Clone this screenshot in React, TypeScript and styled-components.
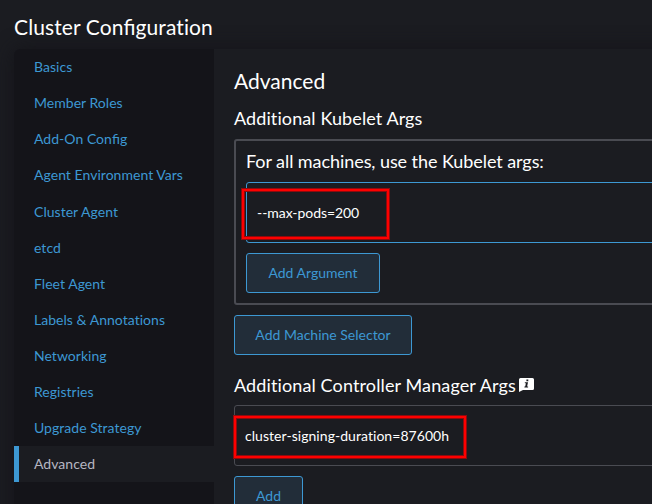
import React from "react";
import styled, { createGlobalStyle } from "styled-components";

const GlobalStyle = createGlobalStyle`
  * { box-sizing: border-box; }
  html, body { margin: 0; height: 504px; overflow: hidden; background: #1b1c21; }
  body {
    font: 14px/16.1px Lato, sans-serif;
    font-variant-ligatures: none;
    color: #fff;
  }
`;

const Page = styled.main`
  width: 652px;
  height: 504px;
  padding: 13px 0 0 14px;
  overflow: hidden;
`;

const Title = styled.h2`
  margin: 0 0 9.15px;
  font-size: 21px;
  line-height: 27px;
  font-weight: 400;
  letter-spacing: 0.1px;
`;

const Ligature = styled.span`
  font-variant-ligatures: common-ligatures;
  letter-spacing: 0;
`;

const Shell = styled.div`
  display: flex;
  width: 900px;
  height: 600px;
  border-radius: 6px;
  box-shadow: 0 0 20px #141419;
  background: #1b1c21;
`;

const Nav = styled.nav`
  width: 200px;
  flex: none;
  background: #141419;
  border-radius: 6px 0 0 6px;
`;

const NavItem = styled.a<{ $active?: boolean }>`
  display: block;
  padding: 10px 15px;
  border-left: 5px solid ${(p) => (p.$active ? "#3d98d3" : "transparent")};
  background: ${(p) => (p.$active ? "#1b1c21" : "transparent")};
  color: ${(p) => (p.$active ? "#b6b6c2" : "#3d98d3")};
  letter-spacing: 0.03px;
`;

const Content = styled.section`
  flex: 1;
  padding: 18.85px 20px 20px;
`;

const Heading = styled.h2`
  margin: 0 0 15px;
  font-size: 21px;
  line-height: 25px;
  font-weight: 400;
`;

const SubHeading = styled.h3<{ $gap?: number; $tracking?: number }>`
  display: flex;
  align-items: center;
  margin: 0 0 ${(p) => p.$gap ?? 10}px;
  font-size: 18px;
  line-height: 21px;
  font-weight: 400;
  letter-spacing: ${(p) => p.$tracking ?? 0.1}px;
`;

const Group = styled.div`
  height: 166px;
  margin-bottom: 10px;
  padding: 10px;
  border: 2px solid #4a4b52;
  border-radius: 3px;
`;

const ArgField = styled.div<{ $focused?: boolean; $tracking: number }>`
  position: relative;
  display: flex;
  align-items: center;
  height: 61px;
  padding: 2px 10px 0;
  margin-bottom: 10px;
  border: 1px solid ${(p) => (p.$focused ? "#3d98d3" : "#4a4b52")};
  border-radius: 3px;
  letter-spacing: ${(p) => p.$tracking}px;
`;

const Mark = styled.span<{ $x: number; $y: number; $w: number; $h: number }>`
  position: absolute;
  left: ${(p) => p.$x}px;
  top: ${(p) => p.$y}px;
  width: ${(p) => p.$w}px;
  height: ${(p) => p.$h}px;
  border: 1px solid #8c0b0e;
  box-shadow: inset 0 0 0 2px #fe0000, inset 0 0 0 3px #8c0b0e;
`;

const Button = styled.button<{ $w: number; $gap?: number }>`
  display: block;
  width: ${(p) => p.$w}px;
  height: 40px;
  margin: 0 0 ${(p) => p.$gap ?? 0}px;
  padding: 0;
  border: 1px solid #3d98d3;
  border-radius: 3px;
  background: #222d39;
  color: #3d98d3;
  font: inherit;
  font-variant-ligatures: none;
`;

const InfoIcon = styled.svg`
  width: 15px;
  height: 14px;
  margin-left: 3px;
  margin-top: -1px;
`;

const tabs = [
  "Basics", "Member Roles", "Add-On Config", "Agent Environment Vars",
  "Cluster Agent", "etcd", "Fleet Agent", "Labels & Annotations",
  "Networking", "Registries", "Upgrade Strategy", "Advanced",
];

/* Joins "fi" while leaving every other letter pair unligated. */
function Label({ text }: { text: string }) {
  const at = text.indexOf("fi");
  if (at < 0) return <>{text}</>;
  return (
    <>
      {text.slice(0, at)}
      <Ligature>fi</Ligature>
      {text.slice(at + 2)}
    </>
  );
}

export default function App() {
  return (
    <Page>
      <GlobalStyle />
      <Title><Label text="Cluster Configuration" /></Title>
      <Shell>
        <Nav>
          {tabs.map((tab) => (
            <NavItem key={tab} $active={tab === "Advanced"}><Label text={tab} /></NavItem>
          ))}
        </Nav>
        <Content>
          <Heading>Advanced</Heading>
          <SubHeading>Additional Kubelet Args</SubHeading>
          <Group>
            <SubHeading $tracking={-0.07}>For all machines, use the Kubelet args:</SubHeading>
            <ArgField $focused $tracking={-0.06}>
              --max-pods=200
              <Mark $x={-6} $y={5} $w={149} $h={52} />
            </ArgField>
            <Button $w={134}>Add Argument</Button>
          </Group>
          <Button $w={178} $gap={20}>Add Machine Selector</Button>
          <SubHeading $gap={9} $tracking={0.12}>
            Additional Controller Manager Args
            <InfoIcon viewBox="0 0 15 14">
              <path d="M1.5 0h12Q15 0 15 1.5v9q0 1.5-1.5 1.5H4L0 14V1.5Q0 0 1.5 0z" fill="#fff" />
              <path d="M7.4 1.6h1.9v1.7H7.4zM5.8 4.3h3.2L8.1 8.6h1v1H5.4v-1h.8l.7-3.3h-1z" fill="#1b1c21" />
            </InfoIcon>
          </SubHeading>
          <ArgField $tracking={0.05}>
            cluster-signing-duration=87600h
            <Mark $x={-2} $y={9} $w={234} $h={44} />
          </ArgField>
          <Button $w={69}>Add</Button>
        </Content>
      </Shell>
    </Page>
  );
}
